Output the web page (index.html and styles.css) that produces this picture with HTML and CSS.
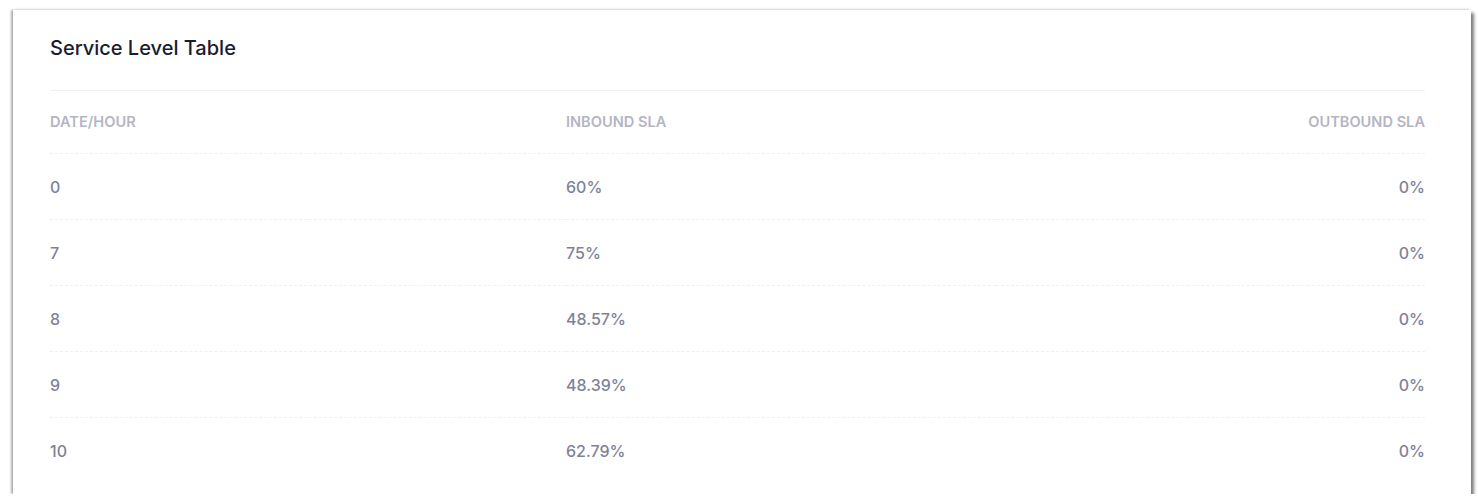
FILE: index.html
```html
<!DOCTYPE html>
<html lang="en">
<head>
<meta charset="utf-8">
<title>Service Level Table</title>
<link rel="stylesheet" href="styles.css">
</head>
<body>
<div class="card">
  <div class="card-header">
    <h3 class="card-title">Service Level Table</h3>
  </div>
  <div class="card-body">
    <table class="sla-table">
      <colgroup>
        <col class="col-date">
        <col class="col-in">
        <col class="col-out">
      </colgroup>
      <thead>
        <tr>
          <th>Date/Hour</th>
          <th>Inbound SLA</th>
          <th class="end">Outbound SLA</th>
        </tr>
      </thead>
      <tbody>
        <tr><td>0</td><td>60%</td><td class="end">0%</td></tr>
        <tr><td>7</td><td>75%</td><td class="end">0%</td></tr>
        <tr><td>8</td><td>48.57%</td><td class="end">0%</td></tr>
        <tr><td>9</td><td>48.39%</td><td class="end">0%</td></tr>
        <tr><td>10</td><td>62.79%</td><td class="end">0%</td></tr>
      </tbody>
    </table>
  </div>
</div>
</body>
</html>
```

FILE: styles.css
```css
html, body {
  margin: 0;
  background: #ffffff;
}
body {
  padding: 10px 7px 0 13px;
  font-family: Inter, "Noto Sans", sans-serif;
}
.card {
  background: #ffffff;
  height: 484px;
  box-sizing: border-box;
  box-shadow: -2px 0 2px rgba(0,0,0,0.3), 3px 3px 3px rgba(0,0,0,0.5), 0 -1px 4px rgba(0,0,0,0.06);
}
.card-header {
  height: 80px;
  display: flex;
  align-items: center;
  padding: 0 46px 0 37px;
}
.card-title {
  margin: 0;
  font-size: 20px;
  font-weight: 500;
  color: #181c32;
  flex: 1;
  padding-bottom: 4px;
}
.card-body {
  padding: 0 46px 0 37px;
}
.sla-table {
  width: 100%;
  border-collapse: collapse;
  table-layout: fixed;
}
.col-date { width: 516px; }
.sla-table thead tr {
  border-top: 1px solid #eff2f5;
  border-bottom: 1px dashed #eff2f5;
}
.sla-table th {
  height: 62px;
  padding: 0;
  text-align: left;
  font-size: 14.6px;
  font-weight: 600;
  text-transform: uppercase;
  color: #b5b5c3;
  vertical-align: middle;
}
.sla-table td {
  height: 65px;
  padding: 0;
  font-size: 16px;
  font-weight: 500;
  color: #7e8299;
  vertical-align: middle;
}
.sla-table tbody tr + tr {
  border-top: 1px dashed #eff2f5;
}
.sla-table .end {
  text-align: right;
}
```
